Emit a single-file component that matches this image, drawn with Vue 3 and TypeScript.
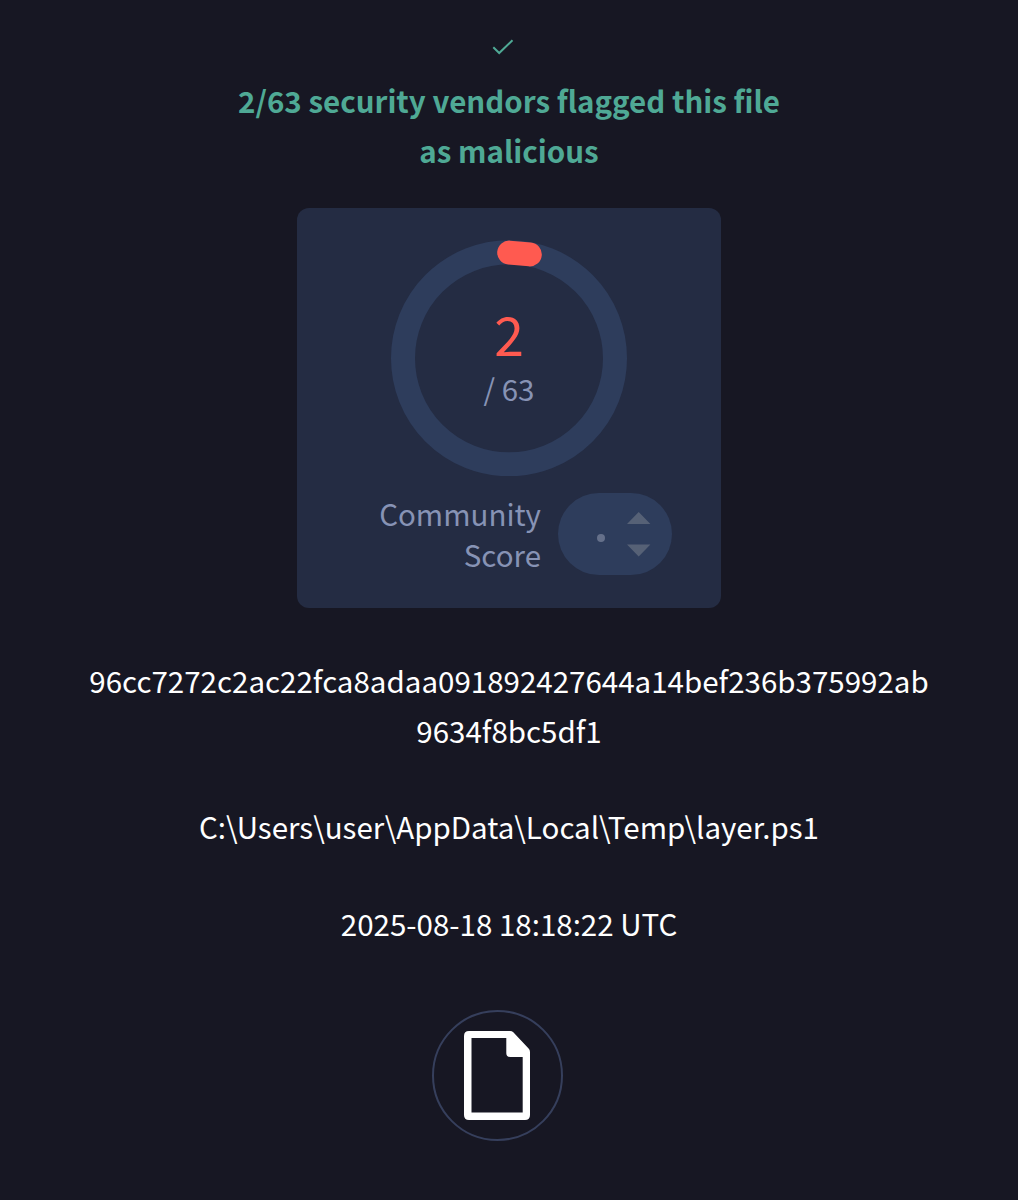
<script setup lang="ts">
const detections = 2
const total = 63
const hashLines: string[] = ['96cc7272c2ac22fca8adaa091892427644a14bef236b375992ab', '9634f8bc5df1']
const path = 'C:\\Users\\user\\AppData\\Local\\Temp\\layer.ps1'
const date = '2025-08-18 18:18:22 UTC'
</script>

<template>
  <main class="page">
    <svg class="check" width="24" height="18" viewBox="0 0 24 18"><path d="M2.3 9.3 L8.2 15 L21.5 2.2" /></svg>
    <h1 class="title"><span>{{ detections }}/{{ total }} security vendors flagged this file</span><span>as malicious</span></h1>
    <section class="card">
      <div class="gauge">
        <svg class="ring" width="236" height="236" viewBox="0 0 236 236">
          <circle class="track" cx="118" cy="118.3" r="106" />
          <path class="value" d="M118.2 12.6 L138.8 14.4" />
        </svg>
        <div class="score"><strong>{{ detections }}</strong><span>/ {{ total }}</span></div>
      </div>
      <div class="community">
        <div class="label"><span>Community</span><span>Score</span></div>
        <div class="pill">
          <i class="dot"></i>
          <svg width="24" height="46" viewBox="0 0 24 46"><path d="M0 13 L11.7 1 L23.4 13 Z M0 33.5 L11.7 45.5 L23.4 33.5 Z" /></svg>
        </div>
      </div>
    </section>
    <p class="hash"><span v-for="line in hashLines" :key="line">{{ line }}</span></p>
    <p class="path">{{ path }}</p>
    <p class="date">{{ date }}</p>
    <div class="file">
      <svg width="66" height="89" viewBox="0 0 66 89"><path fill-rule="evenodd" d="M5 0 H46 Q48 0 49.3 1.3 L64.6 17.6 Q66 19 66 21 V84 Q66 89 61 89 H5 Q0 89 0 84 V5 Q0 0 5 0 Z M7.5 7 V81.5 H58.7 V26 H46 Q42.3 26 42.3 22.3 V7 Z" /></svg>
    </div>
  </main>
</template>

<style>
body { margin: 0; background: #171723; }
</style>

<style scoped>
.page { box-sizing: border-box; height: 1200px; padding-top: 38px; display: flex; flex-direction: column; align-items: center; background: #171723; color: #fff; font-family: "Noto Sans CJK SC", sans-serif; font-size: 29.53px; line-height: 50px; }
.check { flex: none; margin-right: 12px; fill: none; stroke: #4fa995; stroke-width: 2; }
.title { margin: 20px 0 0; font-size: 29.53px; font-weight: 700; color: #4fa995; }
.title span, .hash span, .label span { display: block; text-align: center; white-space: nowrap; }
.card { box-sizing: border-box; flex: none; width: 424px; height: 400px; margin-top: 32px; padding-top: 32px; border-radius: 12px; background: #242c43; display: flex; flex-direction: column; align-items: center; font-size: 29.5px; }
.gauge { display: grid; width: 236px; height: 236px; }
.ring, .score { grid-area: 1 / 1; }
.ring circle, .ring path { fill: none; stroke-width: 24; }
.ring .track { stroke: #2e3d5c; }
.ring .value { stroke: #ff5a50; stroke-linecap: round; }
.score { display: flex; flex-direction: column; align-items: center; padding-top: 63px; color: #8793b5; }
.score strong { font-size: 53.5px; line-height: 60px; font-weight: 400; color: #ff5a50; }
.score span { line-height: 51px; }
.community { display: flex; margin-top: 17px; align-self: flex-end; margin-right: 49px; }
.label { margin: 0 17px 0 0; color: #8793b5; line-height: 41px; }
.label span { text-align: right; }
.pill { box-sizing: border-box; display: flex; align-items: center; width: 114px; height: 82px; border-radius: 41px; background: #2e3d5c; padding-left: 38.5px; }
.pill svg { margin-left: 22px; fill: #566176; }
.dot { width: 8px; height: 8px; border-radius: 50%; background: #65708a; margin-top: 7px; }
p { margin: 0; white-space: nowrap; }
.hash { margin-top: 48px; }
.path { margin-top: 46px; }
.date { margin-top: 47px; }
.file { box-sizing: border-box; flex: none; width: 131px; height: 131px; margin: 61px 24px 0 0; border: 2px solid #363f5c; border-radius: 50%; display: flex; align-items: center; justify-content: center; }
.file svg { fill: #fff; }
</style>
